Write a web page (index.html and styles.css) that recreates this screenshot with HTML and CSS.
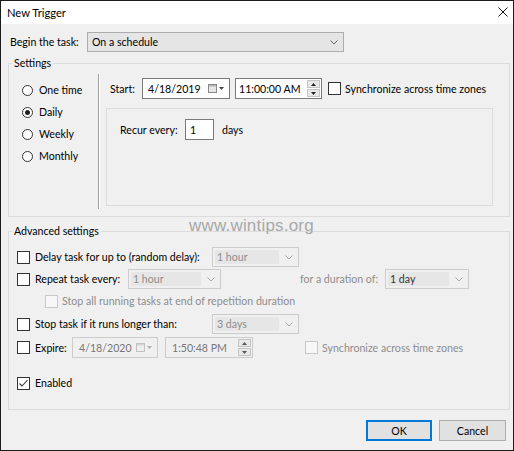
FILE: index.html
```html
<!DOCTYPE html>
<html>
<head>
<meta charset="utf-8">
<title>New Trigger</title>
<link rel="stylesheet" href="styles.css">
</head>
<body>
<div class="window">
  <div class="titlebar">
    <span class="title">New Trigger</span>
    <svg class="close" width="10" height="10" viewBox="0 0 10 10"><path d="M0.5 0.5 L9.5 9.5 M9.5 0.5 L0.5 9.5" stroke="#111" stroke-width="1" fill="none"/></svg>
  </div>
  <div class="body">
    <div class="begin-row">
      <span class="begin-label">Begin the task:</span>
      <div class="combo combo-begin"><span>On a schedule</span><svg class="chev" width="8" height="5" viewBox="0 0 8 5"><polyline points="0.5,0.5 4,4 7.5,0.5" stroke="#666" fill="none"/></svg></div>
    </div>

    <fieldset class="group settings">
      <legend>Settings</legend>
      <div class="settings-inner">
        <div class="radios">
          <div class="radio-row"><span class="radio"></span><span>One time</span></div>
          <div class="radio-row"><span class="radio checked"></span><span>Daily</span></div>
          <div class="radio-row"><span class="radio"></span><span>Weekly</span></div>
          <div class="radio-row"><span class="radio"></span><span>Monthly</span></div>
        </div>
        <div class="divider"></div>
        <div class="schedule">
          <div class="start-row">
            <span class="start-label">Start:</span>
            <div class="field date-field">
              <span>4/18/2019</span>
              <span class="cal">
                <svg width="16" height="9" viewBox="0 0 16 9"><rect x="0.5" y="0.5" width="8" height="8" fill="#e6e6e6" stroke="#8a8a8a"/><rect x="1" y="1" width="7" height="1.5" fill="#b5b5b5"/><polygon points="11,3 16,3 13.5,6" fill="#444"/></svg>
              </span>
            </div>
            <div class="field time-field">
              <span>11:00:00 AM</span>
              <span class="spin">
                <span class="spin-btn"><svg width="5" height="3" viewBox="0 0 5 3"><polygon points="2.5,0 5,3 0,3" fill="#222"/></svg></span>
                <span class="spin-btn"><svg width="5" height="3" viewBox="0 0 5 3"><polygon points="0,0 5,0 2.5,3" fill="#222"/></svg></span>
              </span>
            </div>
            <span class="check sync-check"></span>
            <span>Synchronize across time zones</span>
          </div>
          <div class="recur-box">
            <div class="recur-row">
              <span class="recur-label">Recur every:</span>
              <div class="field num-field"><span>1</span></div>
              <span class="days">days</span>
            </div>
          </div>
        </div>
      </div>
    </fieldset>

    <fieldset class="group advanced">
      <legend>Advanced settings</legend>
      <div class="adv-inner">
        <div class="adv-row r-delay">
          <span class="check"></span>
          <span class="lbl w177">Delay task for up to (random delay):</span>
          <div class="combo combo-dis w87"><span class="ctext">1 hour</span><svg class="chev" width="8" height="5" viewBox="0 0 8 5"><polyline points="0.5,0.5 4,4 7.5,0.5" stroke="#a8a8a8" fill="none"/></svg></div>
        </div>
        <div class="adv-row r-repeat">
          <span class="check"></span>
          <span class="lbl w93">Repeat task every:</span>
          <div class="combo combo-dis w93 short"><span class="ctext">1 hour</span><svg class="chev" width="8" height="5" viewBox="0 0 8 5"><polyline points="0.5,0.5 4,4 7.5,0.5" stroke="#a8a8a8" fill="none"/></svg></div>
          <span class="lbl dis dur-label">for a duration of:</span>
          <div class="combo combo-dis w84"><span class="ctext dark">1 day</span><svg class="chev" width="8" height="5" viewBox="0 0 8 5"><polyline points="0.5,0.5 4,4 7.5,0.5" stroke="#a8a8a8" fill="none"/></svg></div>
        </div>
        <div class="adv-row r-stopall">
          <span class="check disabled"></span>
          <span class="dis">Stop all running tasks at end of repetition duration</span>
        </div>
        <div class="adv-row r-stop">
          <span class="check"></span>
          <span class="lbl w177">Stop task if it runs longer than:</span>
          <div class="combo combo-dis w87"><span class="ctext">3 days</span><svg class="chev" width="8" height="5" viewBox="0 0 8 5"><polyline points="0.5,0.5 4,4 7.5,0.5" stroke="#a8a8a8" fill="none"/></svg></div>
        </div>
        <div class="adv-row r-expire">
          <span class="check"></span>
          <span class="lbl w37">Expire:</span>
          <div class="field field-dis exp-date">
            <span>4/18/2020</span>
            <span class="cal">
              <svg width="16" height="9" viewBox="0 0 16 9"><rect x="0.5" y="0.5" width="8" height="8" fill="#eeeeee" stroke="#c2c2c2"/><rect x="1" y="1" width="7" height="1.5" fill="#d6d6d6"/><polygon points="11,3 16,3 13.5,6" fill="#b0b0b0"/></svg>
            </span>
          </div>
          <div class="field field-dis exp-time">
            <span>1:50:48 PM</span>
            <span class="spin">
              <span class="spin-btn"><svg width="5" height="3" viewBox="0 0 5 3"><polygon points="2.5,0 5,3 0,3" fill="#555"/></svg></span>
              <span class="spin-btn"><svg width="5" height="3" viewBox="0 0 5 3"><polygon points="0,0 5,0 2.5,3" fill="#555"/></svg></span>
            </span>
          </div>
          <span class="check disabled exp-sync"></span>
          <span class="dis">Synchronize across time zones</span>
        </div>
        <div class="adv-row r-enabled">
          <span class="check checked"><svg width="11" height="11" viewBox="0 0 11 11"><polyline points="1.5,5.5 4,8 9.5,2" stroke="#333" stroke-width="1.1" fill="none"/></svg></span>
          <span>Enabled</span>
        </div>
      </div>
    </fieldset>

    <div class="buttons">
      <button class="btn btn-ok">OK</button>
      <button class="btn btn-cancel">Cancel</button>
    </div>
  </div>
  <div class="watermark">www.wintips.org</div>
</div>
</body>
</html>
```

FILE: styles.css
```css
* { box-sizing: border-box; }
html, body { margin: 0; padding: 0; background: #ffffff; }
body {
  font-family: Lato, "Liberation Sans", sans-serif;
  font-size: 10.6px;
  color: #000;
}

.window {
  width: 514px;
  height: 451px;
  border: 1px solid #1c1c1c;
  background: #f0f0f0;
  position: relative;
  display: flex;
  flex-direction: column;
}

.titlebar {
  height: 23px;
  background: #fff;
  display: flex;
  align-items: center;
  justify-content: space-between;
  padding: 0 5px 1px 6px;
  flex: none;
}
.title { font-size: 11.2px; }

.body {
  flex: 1;
  padding: 8px 3px 0 7px;
  display: flex;
  flex-direction: column;
}

/* Begin row */
.begin-row {
  display: flex;
  align-items: center;
  height: 20px;
  padding-left: 2px;
}
.begin-label { width: 77px; }

.combo {
  height: 20px;
  border: 1px solid #adadad;
  background: #e5e5e5;
  display: flex;
  align-items: center;
  justify-content: space-between;
  padding: 0 5px 0 4px;
  flex: none;
}
.combo-begin { width: 257px; }

/* Group boxes */
.group {
  margin: 4px 0 0 0;
  padding: 0;
  border: 1px solid #dcdcdc;
  min-width: 0;
}
.group legend {
  padding: 0 2px;
  margin-left: 3px;
  line-height: 14px;
}

.settings-inner {
  display: flex;
  height: 135px;
  margin: 4px 0 7px 0;
}
.radios {
  width: 89px;
  padding: 5px 0 0 13px;
}
.radio-row {
  display: flex;
  align-items: center;
  height: 22px;
}
.radio {
  width: 11px;
  height: 11px;
  border: 1px solid #333;
  border-radius: 50%;
  background: #fff;
  margin-right: 6px;
  display: flex;
  align-items: center;
  justify-content: center;
}
.radio.checked::after {
  content: "";
  width: 5px;
  height: 5px;
  border-radius: 50%;
  background: #222;
}
.divider {
  width: 2px;
  border-left: 1px solid #a0a0a0;
  border-right: 1px solid #ffffff;
}

.schedule {
  padding: 4px 0 0 6px;
  display: flex;
  flex-direction: column;
}
.start-row {
  display: flex;
  align-items: center;
  height: 21px;
  padding-left: 4px;
}
.start-label { width: 32px; }

.field {
  height: 21px;
  border: 1px solid #7a7a7a;
  background: #fff;
  display: flex;
  align-items: center;
  justify-content: space-between;
  padding-left: 5px;
  flex: none;
}
.date-field { width: 88px; padding-right: 5px; }
.time-field { width: 87px; margin-left: 5px; padding-left: 3px; padding-right: 1px; }
.cal { display: flex; align-items: center; }

.spin {
  display: flex;
  flex-direction: column;
  width: 13px;
  height: 17px;
  gap: 1px;
}
.spin-btn {
  flex: 1;
  border: 1px solid #c4c4c4;
  background: #e8e8e8;
  display: flex;
  align-items: center;
  justify-content: center;
}

.check {
  width: 13px;
  height: 13px;
  border: 1px solid #333;
  background: #fff;
  flex: none;
  margin-right: 5px;
  display: flex;
  align-items: center;
  justify-content: center;
}
.check.disabled {
  border-color: #c8c8c8;
  background: #f7f7f7;
}
.sync-check { margin-left: 6px; margin-right: 4px; }

.recur-box {
  margin-top: 9px;
  width: 387px;
  height: 98px;
  border: 1px solid #dcdcdc;
  padding: 10px 0 0 13px;
}
.recur-row {
  display: flex;
  align-items: center;
  height: 21px;
}
.recur-label { width: 65px; }
.num-field { width: 29px; padding-left: 4px; justify-content: flex-start; }
.days { margin-left: 8px; }

/* Advanced */
.advanced { margin-top: 7px; }
.adv-inner {
  display: flex;
  flex-direction: column;
  padding: 9px 0 16px 8px;
}
.adv-row {
  display: flex;
  align-items: center;
  height: 20px;
}
.r-repeat { margin-top: 2px; }
.r-stopall { margin-top: 2px; padding-left: 28px; }
.r-stopall .check { margin-right: 4px; }
.r-stop { margin-top: 3px; }
.r-expire { margin-top: 3px; height: 21px; }
.r-enabled { margin-top: 15px; }

.lbl { flex: none; }
.w177 { width: 177px; }
.w93 { width: 93px; }
.w87 { width: 87px; }
.w84 { width: 84px; }
.w37 { width: 37px; }
.dis { color: #8d8d8d; }
.dur-label { margin-left: 79px; width: 85px; }

.combo-dis {
  border-color: #cccccc;
  background: #f0f0f0;
  padding: 2px 5px 2px 2px;
}
.combo-dis .ctext {
  flex: 1;
  align-self: stretch;
  display: flex;
  align-items: center;
  background: #e6e6e6;
  padding-left: 2px;
  margin-right: 6px;
  color: #8d8d8d;
}
.combo-dis .ctext.dark { color: #333; }

.field-dis {
  border-color: #cccccc;
  background: #f0f0f0;
  color: #777;
}
.exp-date { width: 86px; padding-left: 6px; padding-right: 5px; }
.exp-time { width: 88px; margin-left: 7px; padding-left: 6px; padding-right: 1px; }
.exp-sync { margin-left: 52px; margin-right: 4px; }

/* Buttons */
.buttons {
  display: flex;
  justify-content: flex-end;
  gap: 7px;
  margin-top: 10px;
  padding-right: 4px;
}
.btn {
  height: 21px;
  font-family: inherit;
  font-size: 10.6px;
  background: #e1e1e1;
  border: 1px solid #adadad;
  padding: 0;
  color: #000;
}
.btn-ok { width: 66px; border: 2px solid #0078d7; }
.btn-cancel { width: 67px; }

.watermark {
  position: absolute;
  left: 188px;
  top: 215px;
  font-family: "Liberation Sans", Arial, sans-serif;
  font-size: 17px;
  line-height: 20px;
  color: #a8a8a8;
  letter-spacing: 0.2px;
}
```
